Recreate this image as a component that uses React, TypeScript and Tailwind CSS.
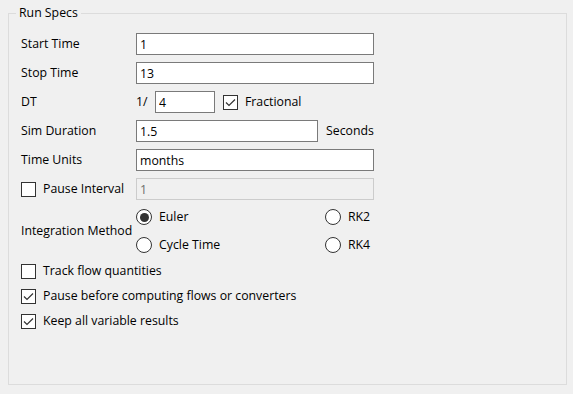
import { ReactNode } from 'react'

const font = { fontFamily: '"Open Sans", "Noto Sans", sans-serif' }

function TextBox({ value, width, disabled }: { value: string; width: string; disabled?: boolean }) {
  return (
    <input
      defaultValue={value}
      disabled={disabled}
      className={`${width} h-[22px] px-[3px] text-[12.3px] outline-none border ${
        disabled ? 'border-[#cccccc] bg-[#f0f0f0] text-[#6d6d6d]' : 'border-[#7a7a7a] bg-white text-black'
      }`}
      style={font}
    />
  )
}

function Check({ checked }: { checked?: boolean }) {
  return (
    <span className="flex h-[15px] w-[15px] shrink-0 items-center justify-center border border-[#333333] bg-white">
      {checked && (
        <svg width="13" height="13" viewBox="0 0 13 13">
          <polyline points="2,6.5 5,9.5 11,3.5" fill="none" stroke="#333333" strokeWidth="1.2" />
        </svg>
      )}
    </span>
  )
}

function Radio({ checked }: { checked?: boolean }) {
  return (
    <span className="flex h-[16px] w-[16px] shrink-0 items-center justify-center rounded-full border border-[#333333] bg-white">
      {checked && <span className="h-[9px] w-[9px] rounded-full bg-[#333333]" />}
    </span>
  )
}

function Row({ label, children }: { label: ReactNode; children: ReactNode }) {
  return (
    <div className="flex h-[22px] items-center">
      <div className="w-[115px] shrink-0">{label}</div>
      {children}
    </div>
  )
}

function CheckOption({ checked, label }: { checked?: boolean; label: string }) {
  return (
    <div className="flex h-[22px] items-center gap-[7px]">
      <Check checked={checked} />
      <span>{label}</span>
    </div>
  )
}

function RadioOption({ checked, label, width }: { checked?: boolean; label: string; width?: string }) {
  return (
    <div className={`flex h-[22px] items-center gap-[7px] ${width ?? ''}`}>
      <Radio checked={checked} />
      <span>{label}</span>
    </div>
  )
}

export default function App() {
  return (
    <div className="h-[394px] w-[573px] bg-[#f0f0f0] px-[8px] pt-[13px] text-[12.3px] text-black" style={font}>
      <div className="relative h-[372px] w-[559px] border border-[#dcdcdc] pl-[12px] pt-[19px]">
        <span className="absolute left-[7px] top-[-8px] bg-[#f0f0f0] px-[3px] leading-[14px]">Run Specs</span>

        <div className="flex flex-col gap-[7px]">
          <Row label="Start Time">
            <TextBox value="1" width="w-[238px]" />
          </Row>
          <Row label="Stop Time">
            <TextBox value="13" width="w-[238px]" />
          </Row>
          <Row label="DT">
            <span className="w-[19px]">1/</span>
            <TextBox value="4" width="w-[60px]" />
            <div className="ml-[8px] flex items-center gap-[7px]">
              <Check checked />
              <span>Fractional</span>
            </div>
          </Row>
          <Row label="Sim Duration">
            <TextBox value="1.5" width="w-[182px]" />
            <span className="ml-[8px]">Seconds</span>
          </Row>
          <Row label="Time Units">
            <TextBox value="months" width="w-[238px]" />
          </Row>
          <Row
            label={
              <div className="flex items-center gap-[7px]">
                <Check />
                <span>Pause Interval</span>
              </div>
            }
          >
            <TextBox value="1" width="w-[238px]" disabled />
          </Row>
        </div>

        <div className="mt-[6px] flex items-center">
          <div className="w-[115px] shrink-0">Integration Method</div>
          <div className="flex flex-col gap-[6px]">
            <div className="flex">
              <RadioOption checked label="Euler" width="w-[189px]" />
              <RadioOption label="RK2" />
            </div>
            <div className="flex">
              <RadioOption label="Cycle Time" width="w-[189px]" />
              <RadioOption label="RK4" />
            </div>
          </div>
        </div>

        <div className="mt-[4px] flex flex-col gap-[3px]">
          <CheckOption label="Track flow quantities" />
          <CheckOption checked label="Pause before computing flows or converters" />
          <CheckOption checked label="Keep all variable results" />
        </div>
      </div>
    </div>
  )
}
